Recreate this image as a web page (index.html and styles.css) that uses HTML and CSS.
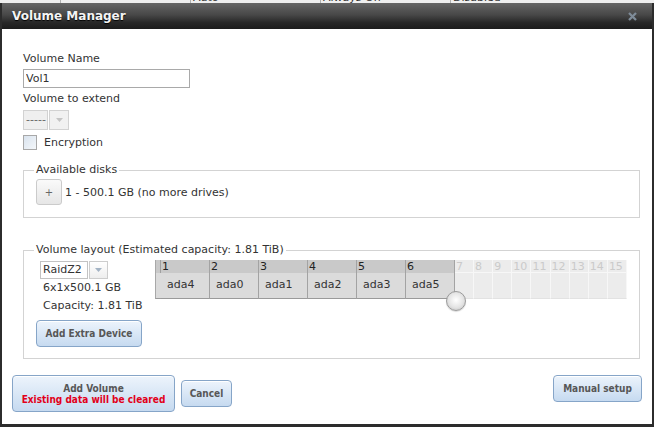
FILE: index.html
```html
<!DOCTYPE html>
<html lang="en">
<head>
    <meta charset="UTF-8">
    <meta name="viewport" content="width=device-width, initial-scale=1.0">
    <title>Volume Manager</title>
    <link rel="stylesheet" href="styles.css">
</head>
<body>
    <!-- storage table that sits behind the dialog -->
    <div class="backdrop-row">
        <span class="cell first"></span>
        <span class="cell"></span>
        <span class="cell">Auto</span>
        <span class="cell">Always On</span>
        <span class="cell">Disabled</span>
    </div>

    <div class="dialog">
        <div class="dialog-title">
            <span>Volume Manager</span>
            <svg class="close" width="9" height="9" viewBox="0 0 9 9">
                <path d="M1 1L8 8M8 1L1 8" />
            </svg>
        </div>

        <div class="dialog-body">
            <form class="volume-form" id="volumeForm">
                <label for="volName">Volume Name</label>
                <input type="text" id="volName" name="volName" value="Vol1">

                <label class="spaced">Volume to extend</label>
                <div class="combo combo-disabled">
                    <span class="combo-text">-----</span>
                    <span class="combo-arrow">
                        <svg width="7" height="4" viewBox="0 0 7 4"><path d="M0 0H7L3.5 4Z" /></svg>
                    </span>
                </div>

                <div class="check-row">
                    <span class="checkbox"></span>
                    <span>Encryption</span>
                </div>

                <fieldset class="disks">
                    <legend>Available disks</legend>
                    <div class="disk-row">
                        <button type="button" class="btn-plus">+</button>
                        <span>1 - 500.1 GB (no more drives)</span>
                    </div>
                </fieldset>

                <fieldset class="layout">
                    <legend>Volume layout (Estimated capacity: 1.81 TiB)</legend>
                    <div class="layout-row">
                        <div class="layout-side">
                            <div class="combo combo-raid">
                                <span class="combo-text">RaidZ2</span>
                                <span class="combo-arrow">
                                    <svg width="7" height="4" viewBox="0 0 7 4"><path d="M0 0H7L3.5 4Z" /></svg>
                                </span>
                            </div>
                            <div class="info first-info">6x1x500.1 GB</div>
                            <div class="info">Capacity: 1.81 TiB</div>
                            <button type="button" class="btn btn-extra">Add Extra Device</button>
                        </div>

                        <div class="disk-grid">
                            <div class="col edge"><span class="head"></span><span class="body"></span></div>
                            <div class="col used"><span class="head">1</span><span class="body">ada4</span></div>
                            <div class="col used"><span class="head">2</span><span class="body">ada0</span></div>
                            <div class="col used"><span class="head">3</span><span class="body">ada1</span></div>
                            <div class="col used"><span class="head">4</span><span class="body">ada2</span></div>
                            <div class="col used"><span class="head">5</span><span class="body">ada3</span></div>
                            <div class="col used"><span class="head">6</span><span class="body">ada5</span></div>
                            <div class="col free"><span class="head">7</span><span class="body"></span></div>
                            <div class="col free"><span class="head">8</span><span class="body"></span></div>
                            <div class="col free"><span class="head">9</span><span class="body"></span></div>
                            <div class="col free"><span class="head">10</span><span class="body"></span></div>
                            <div class="col free"><span class="head">11</span><span class="body"></span></div>
                            <div class="col free"><span class="head">12</span><span class="body"></span></div>
                            <div class="col free"><span class="head">13</span><span class="body"></span></div>
                            <div class="col free"><span class="head">14</span><span class="body"></span></div>
                            <div class="col free"><span class="head">15</span><span class="body"></span></div>
                            <span class="handle"></span>
                        </div>
                    </div>
                </fieldset>
            </form>

            <div class="actions">
                <button type="submit" form="volumeForm" class="btn btn-add">
                    Add Volume<br><span class="warn">Existing data will be cleared</span>
                </button>
                <button type="button" class="btn btn-cancel">Cancel</button>
                <button type="button" class="btn btn-manual">Manual setup</button>
            </div>
        </div>
    </div>
</body>
</html>
```

FILE: styles.css
```css
* {
    box-sizing: border-box;
}
body {
    margin: 0;
    width: 654px;
    height: 427px;
    overflow: hidden;
    font-family: "DejaVu Sans", Verdana, sans-serif;
    font-size: 11px;
    color: #333;
    background-color: #ececec;
}

/* table behind the dialog, only its last pixels show */
.backdrop-row {
    display: flex;
    height: 3px;
    overflow: hidden;
    background-color: #efefef;
}
.backdrop-row .cell {
    width: 130px;
    margin-top: -9px;
    padding-left: 2px;
    line-height: 14px;
    border-left: 1px solid #b0b0b0;
    color: #333;
}
.backdrop-row .first {
    width: 60px;
    border-left: 0;
}

.dialog {
    background-color: white;
    border: 2px solid #2c2c2c;
    border-top: 0;
    border-bottom-width: 3px;
}
.dialog-title {
    display: flex;
    align-items: center;
    justify-content: space-between;
    height: 26px;
    padding: 0 15px 0 10px;
    background: linear-gradient(#666666, #484848 45%, #282828 75%, #1c1c1c);
    color: #f4f4f4;
    font-size: 12px;
    font-weight: bold;
    text-shadow: 0 1px 1px #000;
}
.close path {
    stroke: #7e8b98;
    stroke-width: 2.3;
    fill: none;
}

.volume-form {
    padding: 23px 12px 0 21px;
}
.volume-form label {
    display: block;
    line-height: 14px;
}
.volume-form label.spaced {
    margin-top: 4px;
}
#volName {
    display: block;
    width: 167px;
    height: 19px;
    margin: 3px 0 0 0;
    padding: 0 2px;
    border: 1px solid #a9a9a9;
    font-family: inherit;
    font-size: 11px;
    color: #333;
}

.combo {
    display: flex;
    margin-top: 4px;
    height: 20px;
    width: 46px;
}
.combo-text {
    flex: 1;
    padding-left: 2px;
    line-height: 18px;
    border: 1px solid #d2d2d2;
}
.combo-arrow {
    display: flex;
    align-items: center;
    justify-content: center;
    width: 20px;
    margin-left: 1px;
    border: 1px solid #d2d2d2;
}
.combo-disabled .combo-text {
    background-color: #efefef;
    color: #666;
}
.combo-disabled .combo-arrow {
    background-color: #f1f1f1;
}
.combo-disabled path {
    fill: #c4c4c4;
}

.check-row {
    display: flex;
    align-items: center;
    margin-top: 5px;
    gap: 7px;
    line-height: 14px;
}
.checkbox {
    width: 14px;
    height: 15px;
    border: 1px solid #a8a8a8;
    background: linear-gradient(135deg, #d9e3ee, #f4f7fa);
}

fieldset {
    margin: 0;
    min-width: 0;
    border: 1px solid #d3d3d3;
}
legend {
    margin-left: -2px;
    padding: 0 2px;
    line-height: 14px;
}
.disks {
    margin-top: 13px;
    padding: 2px 12px 12px 12px;
}
.disk-row {
    display: flex;
    align-items: center;
    gap: 3px;
}
.btn-plus {
    width: 26px;
    height: 26px;
    padding: 0;
    border: 1px solid #cbcbcb;
    border-radius: 3px;
    background: linear-gradient(#fafafa, #e6e6e6);
    color: #666;
    font-family: inherit;
    font-size: 10px;
}

.layout {
    margin-top: 25px;
    padding: 3px 12px 11px 12px;
}
.layout-row {
    display: flex;
    align-items: flex-start;
}
.layout-side {
    width: 119px;
}
.combo-raid {
    width: 68px;
    height: 18px;
    margin: 1px 0 0 4px;
}
.combo-raid .combo-text {
    padding-left: 2px;
    line-height: 16px;
    border-color: #c3c3c3;
    color: #333;
}
.combo-raid .combo-arrow {
    width: 19px;
    border-color: #cdcdcd;
    background: linear-gradient(#ffffff, #eeeeee);
}
.combo-raid path {
    fill: #a3b3c4;
}
.info {
    margin: 4px 0 0 7px;
    line-height: 14px;
}
.info.first-info {
    margin-top: 2px;
}

.btn {
    padding: 0;
    border: 1px solid #86a5c8;
    border-radius: 4px;
    background: linear-gradient(#edf4fc, #d9e7f6 50%, #c6daf0);
    box-shadow: inset 0 1px 0 #fff;
    color: #575757;
    font-family: "DejaVu Sans Condensed", "DejaVu Sans", sans-serif;
    font-size: 10px;
    font-weight: bold;
    line-height: 11px;
}
.btn-extra {
    width: 106px;
    height: 27px;
    margin-top: 7px;
}

/* disk slots: used columns, then the empty ones */
.disk-grid {
    position: relative;
    display: flex;
    width: 472px;
    height: 39px;
}
.col {
    display: flex;
    flex-direction: column;
}
.col .head {
    height: 13px;
    padding-left: 1px;
    line-height: 13px;
}
.col .body {
    flex: 1;
    padding: 5px 0 0 6px;
    line-height: 14px;
}
.col.edge {
    width: 6px;
    border-left: 1px solid #a8a8a8;
    border-right: 1px solid #a0a0a0;
    border-bottom: 1px solid #9a9a9a;
}
.col.used {
    width: 49px;
    border-right: 1px solid #a3a3a3;
    border-bottom: 1px solid #9a9a9a;
}
.col.edge .head,
.col.used .head {
    background-color: #c9c9c9;
    color: #222;
}
.col.edge .body,
.col.used .body {
    background-color: #dbdbdb;
}
.col.free {
    flex: 1;
    background-color: #ececec;
    border-right: 1px solid #f7f7f7;
    border-bottom: 1px solid #e2e2e2;
}
.col.free .head {
    color: #cacaca;
    border-bottom: 1px solid #f7f7f7;
}
.handle {
    position: absolute;
    left: 291px;
    top: 31px;
    width: 20px;
    height: 20px;
    border: 1px solid #9b9b9b;
    border-radius: 50%;
    background: radial-gradient(circle at 50% 45%, #ffffff, #e4e4e4 55%, #b9b9b9);
    box-shadow: 0 1px 1px rgba(0, 0, 0, 0.15);
}

.actions {
    display: flex;
    align-items: center;
    padding: 16px 10px 12px 10px;
}
.btn-add {
    width: 163px;
    height: 37px;
}
.btn-add .warn {
    color: #e2001a;
}
.btn-cancel {
    width: 51px;
    height: 27px;
    margin-left: 6px;
}
.btn-manual {
    width: 89px;
    height: 27px;
    margin-left: auto;
    align-self: flex-start;
}
```
